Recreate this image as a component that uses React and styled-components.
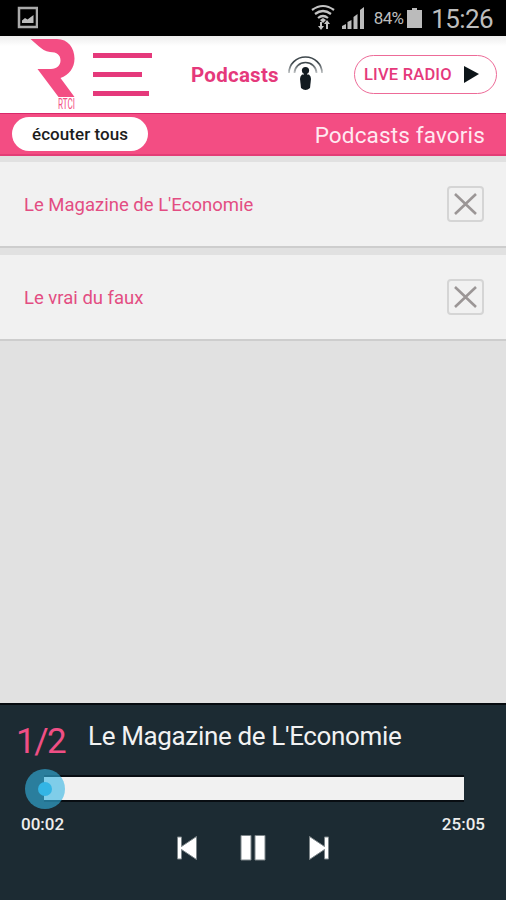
import React from "react";
import styled, { createGlobalStyle } from "styled-components";

const pink = "#f34d83";
const deepPink = "#e5397b";
const dark = "#1c2b33";

const GlobalStyle = createGlobalStyle`
  * {
    box-sizing: border-box;
  }
  body {
    margin: 0;
    font-family: Roboto, "Liberation Sans", sans-serif;
  }
  svg {
    display: block;
    flex: none;
  }
`;

const Screen = styled.div`
  display: flex;
  flex-direction: column;
  width: 506px;
  height: 900px;
  overflow: hidden;
  background: #e1e1e1;
`;

const StatusBar = styled.div`
  display: flex;
  align-items: center;
  justify-content: space-between;
  height: 36px;
  padding: 0 13px 0 17px;
  background: #000;
  color: #bdbdbd;
`;

const StatusGroup = styled.div`
  display: flex;
  align-items: center;
  height: 36px;
`;

const StatusText = styled.span`
  margin: 0 ${props => props.$after || 0}px 0 ${props => props.$gap}px;
  padding-top: ${props => props.$drop}px;
  font-size: ${props => props.$size}px;
  letter-spacing: ${props => props.$spacing}px;
  line-height: 28px;
  white-space: nowrap;
`;

const Header = styled.header`
  display: flex;
  align-items: flex-start;
  height: 77px;
  padding-left: 24px;
  background: linear-gradient(#ededed, #fff 10px);
`;

const Logo = styled.div`
  display: flex;
  flex-direction: column;
  width: 69px;
`;

const LogoName = styled.span`
  width: 30px;
  margin: -2px 0 0 34px;
  font-size: 14px;
  line-height: 16px;
  color: ${pink};
  white-space: nowrap;
  transform: scaleX(0.58);
  transform-origin: left;
`;

const MenuButton = styled.div`
  display: flex;
  flex-direction: column;
  gap: 14px;
  width: 60px;
  padding-top: 17px;
`;

const MenuLine = styled.span`
  width: ${props => props.$width}px;
  height: 5px;
  background: ${deepPink};
`;

const SectionTitle = styled.span`
  width: 97px;
  margin: 27px 0 0 38px;
  font-size: 20.5px;
  font-weight: 700;
  letter-spacing: 0.25px;
  line-height: 24px;
  color: ${deepPink};
  white-space: nowrap;
`;

const PodcastIcon = styled.svg`
  margin-top: 19px;
`;

const LiveButton = styled.div`
  display: flex;
  align-items: center;
  width: 143px;
  height: 39px;
  margin: 19px 0 0 31px;
  padding-left: 9px;
  border: 1px solid #ed6b98;
  border-radius: 20px;
  background: #fff;
`;

const LiveLabel = styled.span`
  width: 100px;
  font-size: 16.5px;
  font-weight: 500;
  letter-spacing: 0.2px;
  color: ${deepPink};
  white-space: nowrap;
`;

const TitleBar = styled.div`
  display: flex;
  align-items: center;
  justify-content: space-between;
  height: 43px;
  padding: 0 21px 0 12px;
  border-top: 1px solid #d9286a;
  border-bottom: 2px solid #e33d76;
  background: ${pink};
`;

const ListenButton = styled.div`
  display: flex;
  align-items: center;
  justify-content: center;
  width: 136px;
  height: 34px;
  border-radius: 17px;
  background: #fff;
  font-size: 17px;
  font-weight: 500;
  letter-spacing: 0.05px;
  color: #1d1d1d;
`;

const PageTitle = styled.span`
  padding-top: 1px;
  font-size: 22.5px;
  letter-spacing: 0.15px;
  color: #ffe9f1;
`;

const List = styled.div`
  display: flex;
  flex: 1;
  flex-direction: column;
  gap: 7px;
  padding-top: 6px;
`;

const Row = styled.div`
  display: flex;
  align-items: center;
  justify-content: space-between;
  height: 86px;
  padding: 0 22px 0 24px;
  border-bottom: 2px solid #cdcdcd;
  background: #f1f1f1;
`;

const RowName = styled.span`
  padding-top: 2px;
  font-size: 18.5px;
  color: #e34d82;
`;

const RemoveButton = styled.div`
  display: flex;
  align-items: center;
  justify-content: center;
  width: 37px;
  height: 36px;
  border: 2px solid #d5d5d5;
  border-radius: 4px;
`;

const Player = styled.footer`
  height: 197px;
  border-top: 2px solid #060b0f;
  background: ${dark};
`;

const TrackInfo = styled.div`
  display: flex;
  height: 70px;
  padding-left: 16px;
`;

const TrackIndex = styled.span`
  width: 72px;
  padding-top: 16px;
  font-size: 35px;
  line-height: 42px;
  letter-spacing: -1.5px;
  color: #ef4f85;
`;

const TrackName = styled.span`
  padding-top: 15px;
  font-size: 26px;
  line-height: 32px;
  letter-spacing: -0.35px;
  color: #f2f2f2;
  white-space: nowrap;
`;

const SeekBar = styled.div`
  position: relative;
  width: 420px;
  height: 27px;
  margin-left: 44px;
  border: solid #080d12;
  border-width: 2px 0;
  background: #f1f1f1;
`;

const SeekThumb = styled.div`
  position: absolute;
  top: -8px;
  left: -19px;
  display: flex;
  align-items: center;
  justify-content: center;
  width: 40px;
  height: 40px;
  border-radius: 50%;
  background: rgba(51, 181, 229, 0.6);

  &:before {
    content: "";
    width: 14px;
    height: 14px;
    border-radius: 50%;
    background: #33b5e5;
  }
`;

const Times = styled.div`
  display: flex;
  justify-content: space-between;
  padding: 12px 21px 0;
  font-size: 17px;
  font-weight: 500;
  line-height: 20px;
  color: #ededed;
`;

const Controls = styled.div`
  display: flex;
  align-items: center;
  justify-content: center;
  gap: 42px;
  height: 28px;
`;

const podcasts = ["Le Magazine de L'Economie", "Le vrai du faux"];

const StatusIcons = () => (
  <svg width="56" height="28" viewBox="0 0 56 28">
    <g fill="none" stroke="#c4c4c4" strokeWidth="2.2">
      <path d="M1 6Q12 -2 23 6M4 10Q12 4 20 10M7 14Q12 10 17 14" />
    </g>
    <path
      d="M9 16l3-2 3 2-3 3zM9 18h2v4h2l-3 4-3-4h2zM15 25v-5h-2l3-4 3 4h-2v5z"
      fill="#c4c4c4"
    />
    <path
      d="M31 25v-3l4-2v5zM36.5 25v-7l4-2v9zM42.5 25V13l4-3v15zM49 25V6l4-3v22z"
      fill="#bcbcbc"
    />
  </svg>
);

const PodcastMark = () => (
  <PodcastIcon width="35" height="37" viewBox="0 0 35 37">
    <defs>
      <linearGradient
        id="waves"
        gradientUnits="userSpaceOnUse"
        x1="0"
        y1="2"
        x2="0"
        y2="19"
      >
        <stop offset="0.35" stopColor="#3e474c" />
        <stop offset="1" stopColor="#3e474c" stopOpacity="0.25" />
      </linearGradient>
    </defs>
    <g fill="none" stroke="url(#waves)" strokeWidth="1.7">
      <path d="M1 18A16.5 16 0 0 1 34 18" />
      <path d="M6.5 18A11 10.5 0 0 1 28.5 18" />
    </g>
    <circle cx="17.5" cy="15.5" r="3.6" fill="#111a20" />
    <path
      d="M14 19.5H21Q23 21 23 24L22 33Q17.5 37 13 33L12 24Q12 21 14 19.5Z"
      fill="#111a20"
    />
    <path d="M16 18H19V20H16Z" fill="#111a20" />
  </PodcastIcon>
);

const SkipIcon = ({ next }) => (
  <svg width="22" height="26" viewBox="0 0 22 26">
    <g
      fill="#fff"
      stroke="#7d868a"
      strokeWidth="1"
      transform={next ? "translate(22 0) scale(-1 1)" : undefined}
    >
      <path d="M1.5 2H5.5V11.5L20.5 1.5V24.5L5.5 14.5V24H1.5Z" />
    </g>
  </svg>
);

const App = () => (
  <>
    <GlobalStyle />
    <Screen>
      <StatusBar>
        <svg width="21" height="26" viewBox="0 0 21 26">
          <path d="M2 3H20V22H2Z" fill="none" stroke="#aaa" strokeWidth="2.5" />
          <path d="M5 18V15.5L8 13L10.5 14.5L16.5 10V18Z" fill="#bbb" />
        </svg>
        <StatusGroup>
          <StatusIcons />
          <StatusText $gap={7} $drop={0} $size={17} $spacing={-0.7} $after={4}>
            84%
          </StatusText>
          <svg width="15" height="24" viewBox="0 0 15 24">
            <path d="M5 2H10V4H15V22H0V4H5Z" fill="#bbb" />
          </svg>
          <StatusText $gap={9} $drop={2} $size={26} $spacing={-0.6}>
            15:26
          </StatusText>
        </StatusGroup>
      </StatusBar>

      <Header>
        <Logo>
          <svg width="54" height="62" viewBox="24 36 54 62">
            <path
              d="M30.5 39H57C68 39 74.5 48 74.5 58.5C74.5 68 69 75 60.5 78L74.5 97H58.5L37.5 69H51C57 69 60.5 65 60.5 60.5C60.5 55 57 52 50 52C45 51.5 42 49 39 46.5Z"
              fill={pink}
            />
          </svg>
          <LogoName>RTCI</LogoName>
        </Logo>
        <MenuButton>
          <MenuLine $width={59} />
          <MenuLine $width={49} />
          <MenuLine $width={56} />
        </MenuButton>
        <SectionTitle>Podcasts</SectionTitle>
        <PodcastMark />
        <LiveButton>
          <LiveLabel>LIVE RADIO</LiveLabel>
          <svg width="15" height="17" viewBox="0 0 15 17">
            <path d="M0 0L15 8L0 17Z" fill="#0d1519" />
          </svg>
        </LiveButton>
      </Header>

      <TitleBar>
        <ListenButton>écouter tous</ListenButton>
        <PageTitle>Podcasts favoris</PageTitle>
      </TitleBar>

      <List>
        {podcasts.map(name => (
          <Row key={name}>
            <RowName>{name}</RowName>
            <RemoveButton>
              <svg width="23" height="22" viewBox="0 0 23 22">
                <path
                  d="M1 1L22 21M22 1L1 21"
                  fill="none"
                  stroke="#9b9696"
                  strokeWidth="2.6"
                />
              </svg>
            </RemoveButton>
          </Row>
        ))}
      </List>

      <Player>
        <TrackInfo>
          <TrackIndex>1/2</TrackIndex>
          <TrackName>{podcasts[0]}</TrackName>
        </TrackInfo>
        <SeekBar>
          <SeekThumb />
        </SeekBar>
        <Times>
          <span>00:02</span>
          <span>25:05</span>
        </Times>
        <Controls>
          <SkipIcon />
          <svg width="26" height="28" viewBox="0 0 26 28">
            <path
              d="M1 1.5H11V26H1ZM15 1.5H25V26H15Z"
              fill="#fff"
              stroke="#7d868a"
            />
          </svg>
          <SkipIcon next />
        </Controls>
      </Player>
    </Screen>
  </>
);

export default App;
